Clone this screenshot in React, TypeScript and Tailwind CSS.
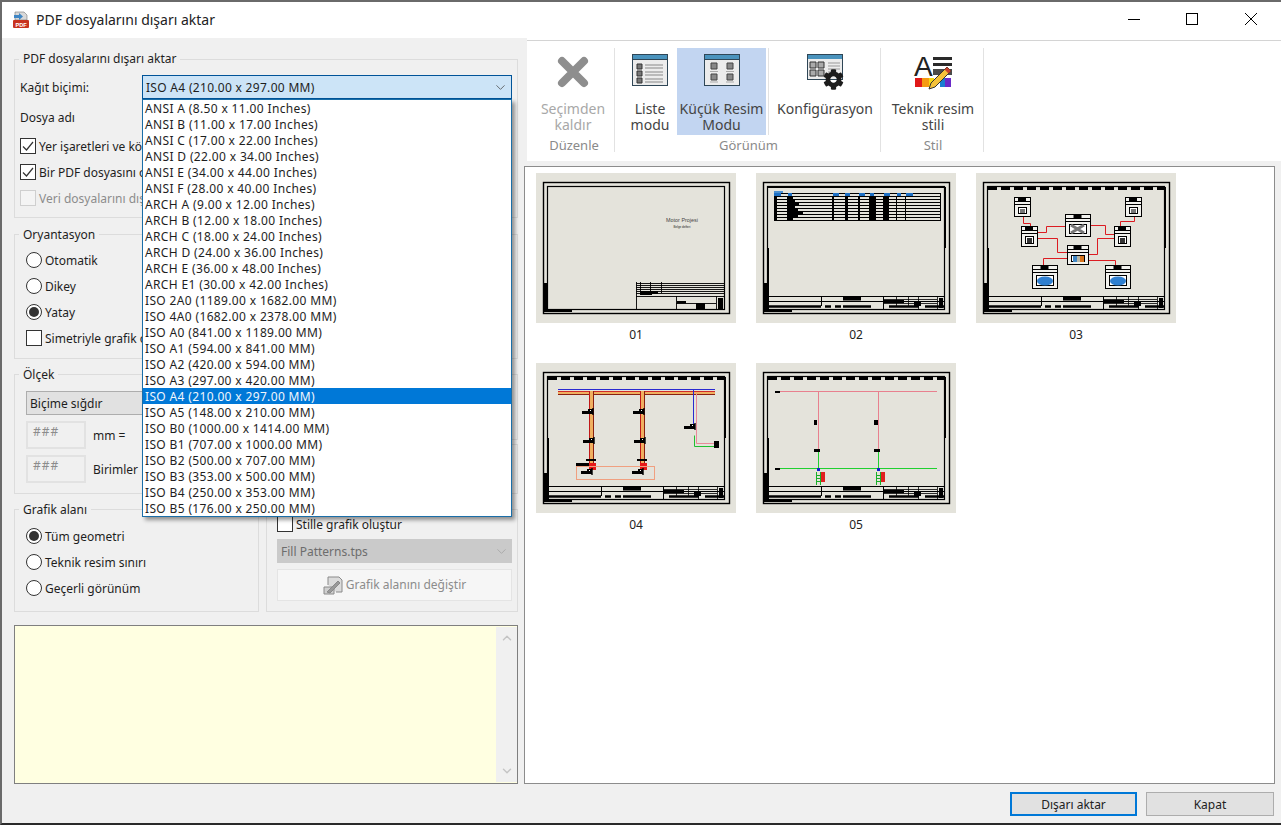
import { ChevronDown, ChevronUp } from "lucide-react";
import { FaCog } from "react-icons/fa";
import type { ReactNode } from "react";

const paperSizes = [
    "ANSI A (8.50 x 11.00 Inches)",
    "ANSI B (11.00 x 17.00 Inches)",
    "ANSI C (17.00 x 22.00 Inches)",
    "ANSI D (22.00 x 34.00 Inches)",
    "ANSI E (34.00 x 44.00 Inches)",
    "ANSI F (28.00 x 40.00 Inches)",
    "ARCH A (9.00 x 12.00 Inches)",
    "ARCH B (12.00 x 18.00 Inches)",
    "ARCH C (18.00 x 24.00 Inches)",
    "ARCH D (24.00 x 36.00 Inches)",
    "ARCH E (36.00 x 48.00 Inches)",
    "ARCH E1 (30.00 x 42.00 Inches)",
    "ISO 2A0 (1189.00 x 1682.00 MM)",
    "ISO 4A0 (1682.00 x 2378.00 MM)",
    "ISO A0 (841.00 x 1189.00 MM)",
    "ISO A1 (594.00 x 841.00 MM)",
    "ISO A2 (420.00 x 594.00 MM)",
    "ISO A3 (297.00 x 420.00 MM)",
    "ISO A4 (210.00 x 297.00 MM)",
    "ISO A5 (148.00 x 210.00 MM)",
    "ISO B0 (1000.00 x 1414.00 MM)",
    "ISO B1 (707.00 x 1000.00 MM)",
    "ISO B2 (500.00 x 707.00 MM)",
    "ISO B3 (353.00 x 500.00 MM)",
    "ISO B4 (250.00 x 353.00 MM)",
    "ISO B5 (176.00 x 250.00 MM)",
];

const CheckBox = ({ checked, disabled, label }: { checked?: boolean; disabled?: boolean; label: string }) => (
    <div className={`flex items-center gap-[3px] h-4 whitespace-nowrap ${disabled ? "text-[#8c8c8c]" : ""}`}>
        <span className={`flex items-center justify-center size-4 shrink-0 border ${disabled ? "border-[#cfcfcf] bg-[#f4f4f4]" : "border-[#333] bg-white"}`}>
            {checked && (
                <svg width="14" height="14" viewBox="0 0 14 14" fill="none" stroke="#333" strokeWidth="1.2">
                    <path d="M2 7.5 L5.5 11 L12 3" />
                </svg>
            )}
        </span>
        <span className="mt-[2px]">{label}</span>
    </div>
);

const Radio = ({ checked, label }: { checked?: boolean; label: string }) => (
    <div className="flex items-center gap-[3px] h-[26px] whitespace-nowrap">
        <span className="flex items-center justify-center size-4 shrink-0 rounded-full border border-[#333] bg-white">
            {checked && <span className="size-[10px] rounded-full bg-[#333]" />}
        </span>
        <span className="mt-[2px]">{label}</span>
    </div>
);

const WindowIcon = ({ children }: { children: ReactNode }) => (
    <svg width="36" height="32" viewBox="0 0 36 32">
        <rect x="0.5" y="0.5" width="35" height="31" fill="#ececec" stroke="#2f4656" />
        <rect x="1" y="1" width="34" height="4" fill="#4a93bd" />
        <line x1="1" y1="5.5" x2="35" y2="5.5" stroke="#2f4656" />
        {children}
    </svg>
);

const ToolButton = ({ icon, lines, active, disabled, className }: { icon: ReactNode; lines: string[]; active?: boolean; disabled?: boolean; className: string }) => (
    <div className={`flex flex-col items-center h-[87px] leading-4 text-[14px] ${active ? "bg-[#c2d5f1]" : ""} ${disabled ? "text-[#a8a8a8]" : "text-[#444]"} ${className}`}>
        <div className="h-[53px] pt-[6px] flex justify-center">{icon}</div>
        {lines.map((l) => (
            <span key={l} className="whitespace-nowrap">{l}</span>
        ))}
    </div>
);

const GroupLabel = ({ children }: { children: ReactNode }) => (
    <div className="mt-[3px] pl-[2px] h-[14px] leading-[15px] text-center text-[13px] text-[#8a8a8a]">{children}</div>
);

// drawing sheet shared by the thumbnails
const Sheet = ({ ruler, children }: { ruler?: boolean; children: ReactNode }) => (
    <svg width="200" height="150" viewBox="0 0 200 150" className="bg-[#e4e3db] block">
        <rect x="7.5" y="9.5" width="186" height="131" fill="none" stroke="#000" strokeWidth="1.4" />
        <rect x="11.5" y="13.5" width="177" height="123" fill="none" stroke="#000" strokeWidth="1.2" />
        <rect x="7" y="110" width="5" height="29" fill="#000" />
        <rect x="12" y="137" width="24" height="2" fill="#000" />
        {ruler && <path d="M12 15.5H189" stroke="#000" strokeWidth="3" strokeDasharray="9 4" />}
        {children}
    </svg>
);

const TitleBlock = () => (
    <g>
        <path d="M12 75V137M189 14V75" stroke="#000" strokeWidth="2" fill="none" />
        <path d="M13 123.5H188M65.5 123V133M127.5 123V137M13 128.5H188" stroke="#000" strokeWidth="1" fill="none" />
        <path d="M13 133.5H188" stroke="#000" strokeWidth="2.4" strokeDasharray="52 4 6 4 6 2 28 18 30 6" />
        <path d="M127 126.5H181M127 130.5H181M140.5 123V133M152.5 123V133M162.5 123V137M181.5 123V137" stroke="#000" strokeWidth="0.8" fill="none" />
        <rect x="87" y="123" width="18" height="4.5" fill="#000" />
        <rect x="128" y="127" width="20" height="3" fill="#000" />
        <rect x="158" y="129" width="7" height="4" fill="#000" />
        <rect x="183" y="125" width="4" height="10" fill="#000" />
    </g>
);

const Thumb01 = () => (
    <Sheet>
        <path d="M100.5 109V137M100 123.5H189M140.5 123V137M180.5 123V137M140 130.5H180M100 110.5H189M100 112.5H189M100 114.5H189M100 116.5H189M100 118.5H189M100 120.5H189M104.5 109V120M114.5 109V120M125.5 109V120" stroke="#000" strokeWidth="0.9" fill="none" />
        <rect x="104" y="118" width="12" height="4" fill="#000" />
        <rect x="114" y="118" width="8" height="3" fill="#000" />
        <rect x="141" y="128" width="9" height="2.5" fill="#000" />
        <rect x="160" y="130" width="9" height="6" fill="#000" />
        <rect x="182" y="125" width="5" height="11" fill="#000" />
        <text x="146" y="49" textAnchor="middle" fontSize="5.4" fill="#444" fontFamily="Liberation Sans, sans-serif">Motor Projesi</text>
        <text x="146" y="55" textAnchor="middle" fontSize="3" fill="#222" fontFamily="Liberation Sans, sans-serif">Belge defteri</text>
    </Sheet>
);

const Thumb02 = () => {
    const rows = [23, 26, 29, 32, 35, 38, 41, 44, 47];
    const blocks = [[18, 3], [31, 6], [76, 2], [89, 3], [102, 2], [113, 7], [127, 6], [140, 1], [149, 1]];
    const blue = [[18, 7], [32, 4], [77, 6], [89, 5], [103, 6], [114, 4], [128, 6], [141, 4], [150, 7]];
    return (
        <Sheet>
            <path d="M12 14H189" stroke="#000" strokeWidth="2" />
            <TitleBlock />
            <path d={rows.map((y) => `M18 ${y}.5H185`).join("")} stroke="#000" strokeWidth="1" />
            <path d="M18 20.5H185M18.5 20V47M184.5 20V47" stroke="#000" strokeWidth="1" fill="none" />
            {blocks.map(([x, w]) => (
                <rect key={x} x={x} y="23" width={w} height="24" fill="#000" />
            ))}
            <path d="M31 26h8v3h4v3h-4v3h3v3h5v3h-5v3h-8z" fill="#000" />
            {blue.map(([x, w]) => (
                <rect key={x} x={x} y="20" width={w} height="3" fill="#1c6fc4" />
            ))}
            <rect x="18" y="18" width="9" height="2" fill="#4a8fd0" />
        </Sheet>
    );
};

const MiniNode = ({ x, y, w, h, children }: { x: number; y: number; w: number; h: number; children: ReactNode }) => (
    <g>
        <rect x={x + 0.5} y={y + 0.5} width={w} height={h} fill="#f2f2ee" stroke="#000" strokeWidth="1" />
        <rect x={x + w / 2 - 4} y={y} width="8" height="5" fill="#000" />
        <path d={`M${x} ${y + 4.5}H${x + w}M${x} ${y + 7.5}H${x + w}`} stroke="#000" strokeWidth="1" />
        <rect x={x + 4.5} y={y + 10.5} width={w - 8} height={h - 13} fill="#fff" stroke="#000" strokeWidth="1" />
        {children}
    </g>
);

const Thumb03 = () => (
    <Sheet ruler>
        <TitleBlock />
        <g transform="translate(0.5 0.5)">
            <path
                d="M47 43V50H54V53M61 59H70V53H89M61 65H81V79H91M114 52H129V61H138M112 81H121V65H138M158 43V48H144V53M91 85H67V92M112 87H139V92"
                stroke="#dc1c22"
                strokeWidth="1"
                fill="none"
            />
        </g>
        <MiniNode x={38} y={24} w={16} h={19}><rect x="44" y="36" width="5" height="4" fill="#777" /></MiniNode>
        <MiniNode x={149} y={24} w={16} h={19}><rect x="155" y="36" width="5" height="4" fill="#777" /></MiniNode>
        <MiniNode x={45} y={53} w={16} h={20}><rect x="51" y="65" width="5" height="5" fill="#333" /></MiniNode>
        <MiniNode x={138} y={53} w={16} h={20}><rect x="144" y="65" width="5" height="5" fill="#333" /></MiniNode>
        <MiniNode x={89} y={41} w={25} h={22}><path d="M95 52L108 60M108 52L95 60" stroke="#777" strokeWidth="3" /></MiniNode>
        <MiniNode x={91} y={72} w={21} h={19}>
            <rect x="97" y="83" width="4" height="6" fill="#3f86c4" />
            <rect x="101" y="83" width="3" height="6" fill="#b8b8a8" />
            <rect x="104" y="83" width="4" height="6" fill="#d8741c" />
        </MiniNode>
        <MiniNode x={56} y={92} w={25} h={23}><ellipse cx="69" cy="108" rx="8" ry="4.5" fill="#2f7fd0" /></MiniNode>
        <MiniNode x={129} y={92} w={25} h={23}><ellipse cx="142" cy="108" rx="8" ry="4.5" fill="#2f7fd0" /></MiniNode>
    </Sheet>
);

const Blob = ({ x, y }: { x: number; y: number }) => (
    <g>
        <rect x={x} y={y} width="6" height="3" fill="#000" />
        <rect x={x + 6} y={y - 2} width="5" height="5" fill="#000" />
        <rect x={x + 8} y={y - 1} width="1" height="1" fill="#fff" />
        <rect x={x + 10} y={y - 3} width="2" height="7" fill="#000" fillOpacity="0.7" />
    </g>
);

const Thumb04 = () => (
    <Sheet ruler>
        <TitleBlock />
        <rect x="22" y="26" width="157" height="1" fill="#2a2ad0" />
        <rect x="22" y="28" width="157" height="1" fill="#d02a2a" />
        <rect x="22" y="29" width="157" height="2" fill="#f0b060" />
        <rect x="22" y="31" width="157" height="1" fill="#8a2010" />
        <rect x="53" y="28" width="1" height="73" fill="#c01818" />
        <rect x="54" y="28" width="3" height="73" fill="#f0b060" />
        <rect x="57" y="28" width="1" height="73" fill="#8a2010" />
        <rect x="104" y="28" width="1" height="73" fill="#c01818" />
        <rect x="105" y="28" width="3" height="73" fill="#f0b060" />
        <rect x="108" y="28" width="1" height="73" fill="#8a2010" />
        <rect x="157" y="26" width="1" height="36" fill="#2a2ad0" />
        <g transform="translate(0.5 0.5)">
            <path d="M160 30V80H179" stroke="#e88a9a" strokeWidth="1" fill="none" />
            <path d="M158 72V83H179" stroke="#20c030" strokeWidth="1" fill="none" />
        </g>
        <rect x="178" y="78" width="5" height="7" fill="#000" />
        <Blob x={46} y={48} />
        <Blob x={97} y={48} />
        <Blob x={47} y={77} />
        <Blob x={98} y={77} />
        <Blob x={148} y={63} />
        <rect x="50" y="96" width="10" height="2" fill="#000" />
        <rect x="101" y="96" width="10" height="2" fill="#000" />
        <rect x="40" y="100" width="13" height="4" fill="#000" />
        <rect x="53" y="100" width="7" height="7" fill="#e81818" />
        <rect x="104" y="100" width="7" height="7" fill="#e81818" />
        <rect x="40.5" y="103.5" width="78" height="13" fill="none" stroke="#f0a080" strokeWidth="1" />
        <Blob x={45} y={108} />
        <Blob x={96} y={108} />
    </Sheet>
);

const Thumb05 = () => (
    <Sheet ruler>
        <TitleBlock />
        <path d="M24 28.5H181M62.5 28V87M122.5 28V87" stroke="#e8808e" strokeWidth="1" fill="none" />
        <path d="M24 105.5H181M62.5 87V106M122.5 87V106" stroke="#20d030" strokeWidth="1" fill="none" />
        <rect x="19" y="28" width="5" height="2" fill="#000" />
        <rect x="19" y="105" width="5" height="2" fill="#000" />
        <rect x="58" y="57" width="3" height="5" fill="#000" />
        <rect x="118" y="57" width="4" height="5" fill="#000" />
        <rect x="58" y="86" width="6" height="3" fill="#000" />
        <rect x="118" y="86" width="6" height="3" fill="#000" />
        <rect x="61" y="105" width="3" height="3" fill="#1420c8" />
        <rect x="121" y="105" width="3" height="3" fill="#1420c8" />
        <path d="M60.5 109V122M64.5 109V122M60 112.5H65M60 115.5H65M60 118.5H65M120.5 109V122M124.5 109V122M120 112.5H125M120 115.5H125M120 118.5H125" stroke="#18b028" strokeWidth="1" fill="none" />
        <rect x="65" y="109" width="4" height="10" fill="#e02020" />
        <rect x="125" y="109" width="4" height="10" fill="#e02020" />
    </Sheet>
);

const thumbs = [
    { name: "01", el: <Thumb01 /> },
    { name: "02", el: <Thumb02 /> },
    { name: "03", el: <Thumb03 /> },
    { name: "04", el: <Thumb04 /> },
    { name: "05", el: <Thumb05 /> },
];

export default function App() {
    return (
        <div className="flex flex-col w-[1281px] h-[825px] overflow-hidden border-t-2 border-l-2 border-b-2 border-t-[#6a6a6a] border-l-[#6a6a6a] border-b-[#2a2a2a] bg-[#f0f0f0] text-[12px] leading-[18px] text-[#1e1e1e] font-['Noto_Sans',sans-serif]">
            {/* title bar */}
            <div className="flex items-center h-9 shrink-0 bg-white pl-[10px]">
                <svg width="18" height="18" viewBox="0 0 18 18">
                    <path d="M3 1h9l3 3v5H3z" fill="#d8d8d8" stroke="#777" strokeWidth="0.6" />
                    <path d="M2 4h5V2l4 3.5L7 9V7H2z" fill="#3f86c4" />
                    <rect x="1" y="9" width="16" height="8" rx="1" fill="#c8321e" />
                    <text x="9" y="15.5" textAnchor="middle" fontSize="5.6" fontWeight="700" fill="#fff" fontFamily="Liberation Sans, sans-serif">PDF</text>
                </svg>
                <span className="ml-[6px] text-[14px] text-[#222]">PDF dosyalarını dışarı aktar</span>
                <div className="ml-auto flex mb-[2px]">
                    <div className="flex items-center justify-center w-[58px] h-6">
                        <div className="w-3 h-px bg-black" />
                    </div>
                    <div className="flex items-center justify-center w-[58px] h-6">
                        <div className="size-3 border border-black" />
                    </div>
                    <div className="flex items-center justify-center w-[60px] h-6">
                        <svg width="12" height="12" viewBox="0 0 12 12" stroke="#000" strokeWidth="1">
                            <path d="M0 0L12 12M12 0L0 12" />
                        </svg>
                    </div>
                </div>
            </div>

            <div className="flex flex-1 min-h-0">
                {/* left settings column */}
                <div className="w-[522px] shrink-0 pl-3 pr-[6px] pt-3">
                    <fieldset className="relative h-[168px] border border-[#dcdcdc]">
                        <legend className="ml-1 px-1 h-[18px]">PDF dosyalarını dışarı aktar</legend>
                        <div className="flex items-center h-6 mt-[7px] pl-[5px]">
                            <span className="w-[122px] mt-[2px]">Kağıt biçimi:</span>
                            <div className="relative w-[370px] h-6">
                                <div className="flex items-center justify-between h-6 pl-[3px] pr-[3px] bg-[#cce4f7] border border-[#005499] tracking-[0.3px]">
                                    <span className="mt-[2px]">ISO A4 (210.00 x 297.00 MM)</span>
                                    <ChevronDown size={15} strokeWidth={1.2} color="#444" />
                                </div>
                                {/* open dropdown list */}
                                <div className="absolute top-full left-0 z-20 w-full border border-[#1a6ea8] bg-white shadow-[3px_3px_4px_rgba(0,0,0,0.4)] leading-[18px] tracking-[0.35px]">
                                    {paperSizes.map((s) => (
                                        <div key={s} className={`h-4 pl-[2px] whitespace-nowrap ${s.startsWith("ISO A4") ? "bg-[#0078d7] text-[#f0f6fc]" : ""}`}>
                                            {s}
                                        </div>
                                    ))}
                                </div>
                            </div>
                        </div>
                        <div className="h-6 mt-[7px] pl-[5px] leading-6">Dosya adı</div>
                        <div className="flex flex-col mt-[3px] pl-[5px]">
                            <div className="flex items-center h-[26px]"><CheckBox checked label="Yer işaretleri ve köprüler oluştur" /></div>
                            <div className="flex items-center h-[26px]"><CheckBox checked label="Bir PDF dosyasını oluşturduktan sonra aç" /></div>
                            <div className="flex items-center h-[26px]"><CheckBox disabled label="Veri dosyalarını dışarı aktar" /></div>
                        </div>
                    </fieldset>

                    <div className="flex gap-[7px] mt-[7px]">
                        <fieldset className="w-[245px] h-[134px] border border-[#dcdcdc] pl-[11px]">
                            <legend className="-ml-[7px] px-1 h-[18px] leading-5">Oryantasyon</legend>
                            <div className="mt-1">
                                <Radio label="Otomatik" />
                                <Radio label="Dikey" />
                                <Radio checked label="Yatay" />
                                <div className="flex items-center h-[26px]"><CheckBox label="Simetriyle grafik oluştur" /></div>
                            </div>
                        </fieldset>
                        <fieldset className="w-[252px] h-[125px] mt-[9px] border border-[#dcdcdc]" />
                    </div>

                    <div className="flex gap-[7px] mt-[6px]">
                        <fieldset className="w-[245px] h-[129px] border border-[#dcdcdc] pl-[11px]">
                            <legend className="-ml-[7px] px-1 h-[18px] leading-5">Ölçek</legend>
                            <div className="flex items-center h-6 w-[222px] mt-2 pl-[3px] bg-[#e1e1e1] border border-[#adadad]"><span className="mt-[2px]">Biçime sığdır</span></div>
                            <div className="flex items-center gap-[7px] mt-[6px]">
                                <div className="w-[60px] h-7 pl-[5px] bg-[#f0f0f0] border-2 border-[#e2e2e2] text-[#8c8c8c] tracking-[1px]">###</div>
                                <span className="mt-[2px]">mm =</span>
                            </div>
                            <div className="flex items-center gap-[7px] mt-[6px]">
                                <div className="w-[60px] h-7 pl-[5px] bg-[#f0f0f0] border-2 border-[#e2e2e2] text-[#8c8c8c] tracking-[1px]">###</div>
                                <span className="mt-[2px]">Birimler</span>
                            </div>
                        </fieldset>
                        <div className="flex flex-col gap-1 mt-[9px]">
                            <fieldset className="w-[252px] h-[66px] border border-[#dcdcdc]" />
                            <fieldset className="w-[252px] h-[50px] border border-[#dcdcdc]" />
                        </div>
                    </div>

                    <div className="flex gap-[7px] mt-[6px]">
                        <fieldset className="w-[245px] h-[112px] border border-[#dcdcdc] pl-[11px]">
                            <legend className="-ml-[7px] px-1 h-[18px] leading-5">Grafik alanı</legend>
                            <div className="mt-[5px]">
                                <Radio checked label="Tüm geometri" />
                                <Radio label="Teknik resim sınırı" />
                                <Radio label="Geçerli görünüm" />
                            </div>
                        </fieldset>
                        <fieldset className="w-[252px] h-[103px] mt-[9px] border border-[#dcdcdc] pl-[10px] pr-[5px]">
                            <div className="mt-[6px]"><CheckBox label="Stille grafik oluştur" /></div>
                            <div className="flex items-center justify-between h-6 mt-[7px] pl-1 pr-[3px] bg-[#cacaca] text-[#6d6d6d]">
                                <span className="mt-[2px]">Fill Patterns.tps</span>
                                <ChevronDown size={15} strokeWidth={1.2} color="#a0a0a0" />
                            </div>
                            <div className="flex items-center justify-center gap-[3px] h-8 mt-[6px] bg-[#f6f6f6] border border-[#e4e4e4] text-[#8c8c8c]">
                                <svg width="20" height="19" viewBox="0 0 20 19" fill="none" stroke="#8a8a8a" strokeWidth="1">
                                    <path d="M5 9V1h11l3 3v12h-6" fill="#dcdcdc" />
                                    <path d="M1 11h10v7H1z" fill="#cfcfcf" />
                                    <path d="M4 16L15 5l2 2L7 17z" fill="#9a9a9a" />
                                </svg>
                                Grafik alanını değiştir
                            </div>
                        </fieldset>
                    </div>

                    <div className="flex h-[159px] mt-[13px] border border-[#7f7f7f] bg-[#ffffe1]">
                        <div className="flex-1" />
                        <div className="flex flex-col items-center justify-between w-[21px] my-px py-[4px] bg-[#f0f0f0]">
                            <ChevronUp size={14} strokeWidth={2.4} color="#c4c4c4" />
                            <ChevronDown size={14} strokeWidth={2.4} color="#c4c4c4" />
                        </div>
                    </div>
                </div>

                {/* right column */}
                <div className="flex flex-col flex-1 min-w-0">
                    <div className="ml-[3px] h-[123px] shrink-0 bg-white">
                        <div className="h-[2px]" />
                        <div className="h-px bg-[#d4d4d4]" />
                        <div className="flex pt-[7px]">
                            <div className="w-[88px] h-[104px] pl-[5px] border-r border-[#e2e2e2]">
                                <ToolButton
                                    disabled
                                    className="w-full"
                                    lines={["Seçimden", "kaldır"]}
                                    icon={
                                        <svg width="32" height="32" viewBox="0 0 32 32" className="mt-[2px]" stroke="#8e8e8e" strokeWidth="8" strokeLinecap="round">
                                            <path d="M5 5L27 27M27 5L5 27" />
                                        </svg>
                                    }
                                />
                                <GroupLabel>Düzenle</GroupLabel>
                            </div>
                            <div className="w-[266px] h-[104px] border-r border-[#e2e2e2]">
                                <div className="flex">
                                    <ToolButton
                                        className="w-[54px] ml-[8px]"
                                        lines={["Liste", "modu"]}
                                        icon={
                                            <WindowIcon>
                                                <path d="M5 10h5v5H5zM5 17h5v5H5zM5 24h5v5H5z" fill="#777" stroke="#333" />
                                                <path d="M13 11H31M13 14H31M13 18H31M13 21H31M13 25H31M13 28H31" stroke="#888" />
                                            </WindowIcon>
                                        }
                                    />
                                    <ToolButton
                                        active
                                        className="w-[89px]"
                                        lines={["Küçük Resim", "Modu"]}
                                        icon={
                                            <WindowIcon>
                                                <path d="M7 9h6v6H7zM23 9h6v6H23zM7 20h6v6H7zM23 20h6v6H23z" fill="#888" stroke="#444" />
                                                <path d="M6 17.5H14M22 17.5H30M6 28H14M22 28H30" stroke="#aaa" />
                                            </WindowIcon>
                                        }
                                    />
                                    <div className="w-px h-[87px] ml-[2px] bg-[#e2e2e2]" />
                                    <ToolButton
                                        className="w-[110px] pl-[2px]"
                                        lines={["Konfigürasyon"]}
                                        icon={
                                            <div className="relative w-[36px] h-[36px]">
                                                <svg width="36" height="26" viewBox="0 0 36 26">
                                                    <rect x="0.5" y="0.5" width="35" height="25" fill="#ececec" stroke="#2f4656" />
                                                    <rect x="1" y="1" width="34" height="4" fill="#4a93bd" />
                                                    <path d="M3 8h6v6H3zM11 8h6v6H11zM3 16h6v6H3zM11 16h6v6H11z" fill="#aaa" stroke="#333" />
                                                    <path d="M21 9H33M21 12H33M21 15H33M21 18H27" stroke="#999" />
                                                </svg>
                                                <FaCog size={21} color="#1c1c1c" className="absolute left-[16px] top-[15px]" />
                                            </div>
                                        }
                                    />
                                </div>
                                <GroupLabel>Görünüm</GroupLabel>
                            </div>
                            <div className="w-[103px] h-[104px] border-r border-[#e2e2e2]">
                                <ToolButton
                                    className="w-full pl-[2px]"
                                    lines={["Teknik resim", "stili"]}
                                    icon={
                                        <svg width="38" height="36" viewBox="0 0 38 36" className="overflow-visible">
                                            <text x="0" y="22" fontSize="28" fill="#222" fontFamily="Liberation Sans, sans-serif">A</text>
                                            <path d="M19 3H38v3H19zM19 9H38v3H19z" fill="#2a2a2a" />
                                            <path d="M19 15H38v6H19z" fill="#4a4a4a" />
                                            <rect x="1" y="24" width="7" height="9" fill="#e01818" />
                                            <rect x="8" y="24" width="7" height="9" fill="#f59a10" />
                                            <rect x="15" y="24" width="5" height="9" fill="#f5d810" />
                                            <rect x="26" y="24" width="5" height="9" fill="#1a7ed0" />
                                            <rect x="31" y="24" width="6" height="9" fill="#6a2ac8" />
                                            <path d="M33 13l4 4L21 33l-6 2 2-6z" fill="#f5c23a" stroke="#333" strokeWidth="1" />
                                            <path d="M33 13l4 4-2.5 2.5-4-4z" fill="#c8402a" />
                                        </svg>
                                    }
                                />
                                <GroupLabel>Stil</GroupLabel>
                            </div>
                        </div>
                    </div>

                    <div className="flex-1 min-h-0 mr-[6px] mt-[5px] border border-[#8c8c8c] bg-white pl-[11px] pt-[6px]">
                        <div className="grid grid-cols-[repeat(3,200px)] gap-x-5">
                            {thumbs.map((t) => (
                                <div key={t.name}>
                                    {t.el}
                                    <div className="h-10 pt-[3px] text-center text-[#222]">{t.name}</div>
                                </div>
                            ))}
                        </div>
                    </div>

                    <div className="flex justify-end gap-[9px] h-[39px] shrink-0 pt-2 pr-[7px]">
                        <button className="w-[127px] h-6 pt-px bg-[#e1e1e1] border-2 border-[#0078d7] text-[#222]">Dışarı aktar</button>
                        <button className="w-[128px] h-6 pt-px bg-[#e1e1e1] border border-[#adadad] text-[#222]">Kapat</button>
                    </div>
                </div>
            </div>
        </div>
    );
}
